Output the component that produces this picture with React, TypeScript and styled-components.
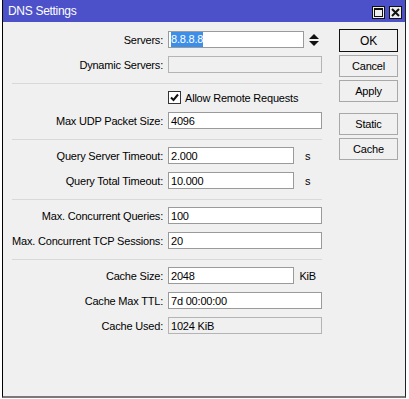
import React from "react";
import styled, { createGlobalStyle } from "styled-components";

const GlobalStyle = createGlobalStyle`
  html, body {
    margin: 0;
    padding: 0;
    background: #ffffff;
  }
  body {
    font-family: "Liberation Sans", Arial, sans-serif;
    font-size: 11px;
    letter-spacing: -0.2px;
    color: #000;
  }
`;

const Window = styled.div`
  margin-left: 2px;
  width: 404px;
  height: 398px;
  box-sizing: border-box;
  display: flex;
  flex-direction: column;
  border-left: 1px solid #000;
  border-right: 1px solid #222;
  border-bottom: 2px solid #7a7a7a;
  background: #f0f0f0;
`;

const TitleBar = styled.div`
  height: 22px;
  flex: 0 0 22px;
  background: #4d51c9;
  display: flex;
  align-items: center;
  padding-left: 5px;
  padding-right: 3px;
`;

const Title = styled.span`
  color: #ffffff;
  font-size: 12px;
  letter-spacing: -0.3px;
  flex: 1;
`;

const TitleButtons = styled.div`
  display: flex;
  gap: 4px;
  align-self: flex-end;
  padding-bottom: 3px;
`;

const TitleButton = styled.div`
  width: 13px;
  height: 13px;
  box-sizing: border-box;
  border: 1px solid #111;
  background: #eeeeee;
  display: flex;
  align-items: center;
  justify-content: center;
`;

const Body = styled.div`
  flex: 1;
  display: flex;
  align-items: flex-start;
`;

const Form = styled.div`
  width: 310px;
  margin-left: 9px;
  padding-top: 9px;
  display: flex;
  flex-direction: column;
`;

const Group = styled.div`
  display: flex;
  flex-direction: column;
  gap: 8px;
`;

const Separator = styled.div`
  height: 1px;
  background: #d9d9d9;
  margin: 10px 0 7px;
`;

const Row = styled.div`
  display: flex;
  align-items: center;
  height: 17px;
  gap: 5px;
`;

const Label = styled.div`
  flex: 0 0 151px;
  display: flex;
  justify-content: flex-end;
  white-space: nowrap;
`;

const Input = styled.div<{ $width?: number; $disabled?: boolean }>`
  width: ${(p) => p.$width ?? 154}px;
  height: 17px;
  box-sizing: border-box;
  border: 1px solid ${(p) => (p.$disabled ? "#b4b4b4" : "#9a9a9a")};
  background: ${(p) => (p.$disabled ? "#f0f0f0" : "#ffffff")};
  display: flex;
  align-items: center;
  padding-left: 2px;
  white-space: nowrap;
  overflow: hidden;
`;

const Selected = styled.span`
  background: #3d8ee8;
  color: #fff;
  line-height: 15px;
`;

const Unit = styled.span`
  width: 30px;
  margin-left: -5px;
  text-align: center;
`;

const CheckRow = styled.div`
  display: flex;
  align-items: center;
  height: 13px;
  margin-left: 156px;
  gap: 4px;
`;

const CheckBox = styled.div`
  width: 13px;
  height: 13px;
  box-sizing: border-box;
  border: 1px solid #333;
  background: #fff;
  display: flex;
  align-items: center;
  justify-content: center;
`;

const Buttons = styled.div`
  width: 59px;
  margin-left: 17px;
  padding-top: 7px;
  display: flex;
  flex-direction: column;
  gap: 3px;
`;

const Button = styled.div<{ $default?: boolean; $spaced?: boolean }>`
  height: ${(p) => (p.$default ? 23 : 22)}px;
  box-sizing: border-box;
  border: 1px solid ${(p) => (p.$default ? "#111" : "#a8a8a8")};
  background: #f0f0f0;
  display: flex;
  align-items: center;
  justify-content: center;
  font-size: ${(p) => (p.$default ? 12 : 11)}px;
  margin-top: ${(p) => (p.$spaced ? 8 : 0)}px;
`;

const Spinner = () => (
  <svg width="10" height="12" viewBox="0 0 10 12" style={{ marginLeft: 0 }}>
    <polygon points="0,5 5,0 10,5" fill="#111" />
    <polygon points="0,7 5,12 10,7" fill="#111" />
  </svg>
);

type FieldProps = {
  label: string;
  value?: React.ReactNode;
  width?: number;
  disabled?: boolean;
  unit?: string;
};

const Field: React.FC<FieldProps> = ({ label, value, width, disabled, unit }) => (
  <Row>
    <Label>{label}</Label>
    <Input $width={width} $disabled={disabled}>
      {value}
    </Input>
    {unit && <Unit>{unit}</Unit>}
  </Row>
);

export default function App() {
  return (
    <>
      <GlobalStyle />
      <Window>
        <TitleBar>
          <Title>DNS Settings</Title>
          <TitleButtons>
            <TitleButton>
              <svg width="9" height="9" viewBox="0 0 9 9">
                <rect x="0.5" y="0.5" width="8" height="8" fill="none" stroke="#111" />
                <line x1="0" y1="1.5" x2="9" y2="1.5" stroke="#111" />
              </svg>
            </TitleButton>
            <TitleButton>
              <svg width="9" height="9" viewBox="0 0 9 9">
                <path d="M1 1 L8 8 M8 1 L1 8" stroke="#111" strokeWidth="2" />
              </svg>
            </TitleButton>
          </TitleButtons>
        </TitleBar>
        <Body>
          <Form>
            <Group>
              <Row>
                <Label>Servers:</Label>
                <Input $width={136}>
                  <Selected>8.8.8.8</Selected>
                </Input>
                <Spinner />
              </Row>
              <Field label="Dynamic Servers:" disabled />
            </Group>
            <Separator />
            <Group>
              <CheckRow>
                <CheckBox>
                  <svg width="9" height="9" viewBox="0 0 9 9">
                    <path d="M1 4.5 L3.5 7 L8 1.5" fill="none" stroke="#111" strokeWidth="2" />
                  </svg>
                </CheckBox>
                <span>Allow Remote Requests</span>
              </CheckRow>
              <Field label="Max UDP Packet Size:" value="4096" />
            </Group>
            <Separator />
            <Group>
              <Field label="Query Server Timeout:" value="2.000" width={132} unit="s" />
              <Field label="Query Total Timeout:" value="10.000" width={132} unit="s" />
            </Group>
            <Separator />
            <Group>
              <Field label="Max. Concurrent Queries:" value="100" />
              <Field label="Max. Concurrent TCP Sessions:" value="20" />
            </Group>
            <Separator />
            <Group>
              <Field label="Cache Size:" value="2048" width={132} unit="KiB" />
              <Field label="Cache Max TTL:" value="7d 00:00:00" />
              <Field label="Cache Used:" value="1024 KiB" disabled />
            </Group>
          </Form>
          <Buttons>
            <Button $default>OK</Button>
            <Button>Cancel</Button>
            <Button>Apply</Button>
            <Button $spaced>Static</Button>
            <Button>Cache</Button>
          </Buttons>
        </Body>
      </Window>
    </>
  );
}
